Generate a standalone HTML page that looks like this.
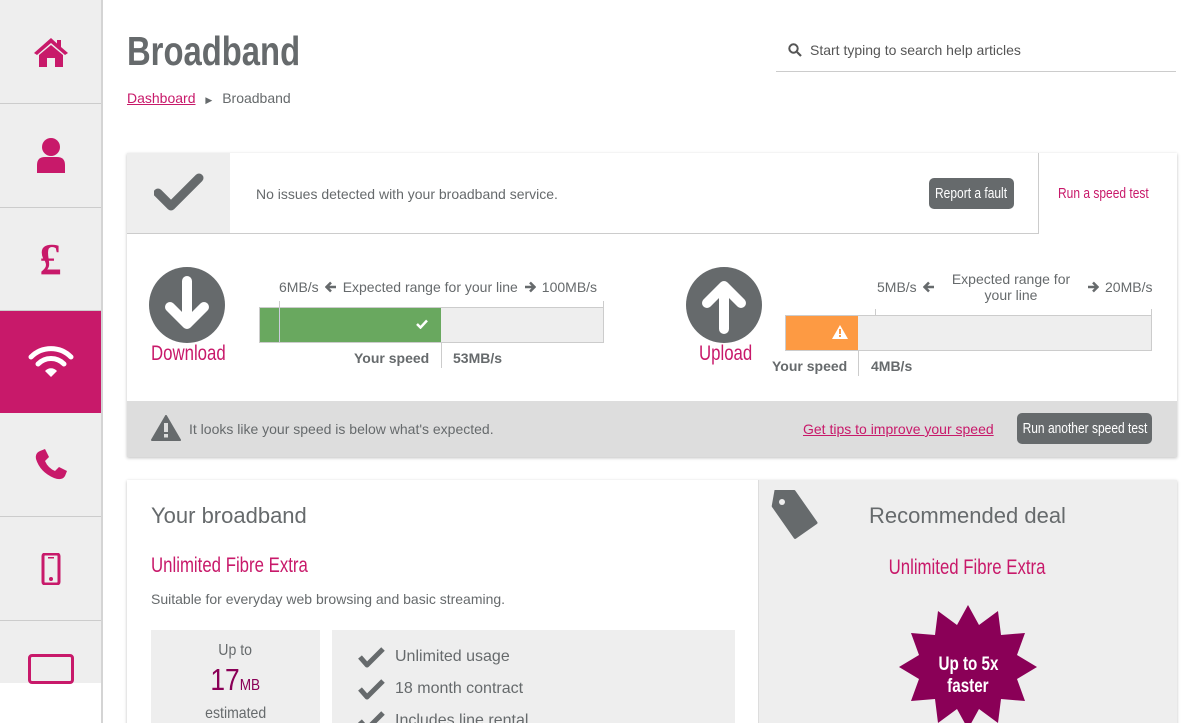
<!DOCTYPE html>
<html><head><meta charset="utf-8"><style>
*{box-sizing:border-box;margin:0;padding:0}
html,body{width:1200px;height:723px;overflow:hidden}
body{background:#fff;font-family:"Liberation Sans",sans-serif;color:#666a6c;position:relative}
.c{display:inline-block;transform:scaleX(.8);transform-origin:0 0;white-space:nowrap}
.cc{display:inline-block;transform:scaleX(.8);transform-origin:50% 0;white-space:nowrap}
.a{position:absolute}
.sb{left:0;top:0;width:103px;height:723px;border-right:2px solid #d4d4d4}
.it{position:absolute;left:0;width:101px;background:#eee;border-bottom:1px solid #ccc;display:flex;align-items:center;justify-content:center}
.pk{color:#c8196a}
.btn{background:#666a6c;color:#fff;border-radius:5px;font-size:15px;display:flex;justify-content:center;align-items:center;white-space:nowrap}
.bar{height:36px;border:1px solid #ccc;background:#eee}
.ar{display:inline-block;vertical-align:-1px;margin:0 6px}
</style></head><body>
<div class="a sb"></div>
<div class="it" style="top:0;height:104px"><svg width="38" height="32" viewBox="0 0 38 32"><path d="M19 2 L2 17 L5 19 L19 7 L33 19 L36 17 L29 11 V4 H25 V7.5Z" fill="#c8196a"/><path d="M7 19 L19 9 L31 19 V31 H23 V22 H15 V31 H7Z" fill="#c8196a"/></svg></div>
<div class="it" style="top:104px;height:104px"><svg width="32" height="38" viewBox="0 0 32 38"><circle cx="16" cy="10" r="9" fill="#c8196a"/><path d="M2 36 V28 Q2 20 10 20 H22 Q30 20 30 28 V36 Z" fill="#c8196a"/></svg></div>
<div class="it" style="top:208px;height:103px"><span style="font:bold 44px 'Liberation Serif',serif;color:#c8196a">£</span></div>
<div class="it" style="top:311px;height:102px;background:#c8196a;border-bottom:none"><svg width="46" height="34" viewBox="0 0 46 34"><path d="M3 12 A28 28 0 0 1 43 12" stroke="#fff" stroke-width="5" fill="none" stroke-linecap="round"/><path d="M10 19 A18 18 0 0 1 36 19" stroke="#fff" stroke-width="5" fill="none" stroke-linecap="round"/><path d="M17 26 A8 8 0 0 1 29 26 L23 32 Z" fill="#fff"/></svg></div>
<div class="it" style="top:413px;height:104px"><svg width="34" height="34" viewBox="0 0 34 34"><path d="M6 3 L11 1 L15 9 L11 13 Q14 20 21 23 L25 19 L33 23 L31 28 Q28 33 20 30 Q6 24 2 11 Q1 5 6 3Z" fill="#c8196a"/></svg></div>
<div class="it" style="top:517px;height:104px"><svg width="20" height="32" viewBox="0 0 20 32"><rect x="2" y="1" width="16" height="30" rx="2" fill="none" stroke="#c8196a" stroke-width="3"/><circle cx="10" cy="26" r="2" fill="#c8196a"/><rect x="7" y="4" width="6" height="1.5" fill="#c8196a"/></svg></div>
<div class="it" style="top:621px;height:62px;border-bottom:none;align-items:flex-start;padding-top:33px"><div style="width:46px;height:30px;border:3px solid #c8196a;border-radius:4px"></div></div>

<div class="a" style="left:127px;top:28px;font-size:41px;font-weight:bold"><span class="c">Broadband</span></div>
<div class="a" style="left:127px;top:90px;font-size:14px"><span class="pk" style="text-decoration:underline">Dashboard</span> <span style="font-size:9px;margin:0 6px">▶</span> Broadband</div>
<div class="a" style="left:776px;top:40px;width:400px;height:32px;border-bottom:1px solid #ccc;font-size:14px;color:#555"><svg class="a" style="left:12px;top:3px" width="14" height="14" viewBox="0 0 14 14"><circle cx="5.5" cy="5.5" r="4.2" stroke="#555" stroke-width="2" fill="none"/><path d="M9 9 L13 13" stroke="#555" stroke-width="2.2"/></svg><span class="a" style="left:34px;top:2px">Start typing to search help articles</span></div>

<div class="a" style="left:127px;top:153px;width:1050px;height:304px;box-shadow:0 1px 3px rgba(0,0,0,.25);background:#fff"></div>
<div class="a" style="left:127px;top:153px;width:103px;height:80px;background:#eee;display:flex;align-items:center;justify-content:center"><svg width="50" height="40" viewBox="0 0 50 40"><path d="M4 20 L17 33 L45 5" stroke="#666a6c" stroke-width="9" fill="none" stroke-linecap="round" stroke-linejoin="round"/></svg></div>
<div class="a" style="left:127px;top:233px;width:912px;border-top:1px solid #ccc"></div>
<div class="a" style="left:1038px;top:153px;height:81px;border-left:1px solid #ccc"></div>
<div class="a" style="left:256px;top:186px;font-size:14px">No issues detected with your broadband service.</div>
<div class="a btn" style="left:929px;top:178px;width:85px;height:31px"><span class="cc">Report a fault</span></div>
<div class="a pk" style="left:1058px;top:185px;font-size:15px"><span class="c">Run a speed test</span></div>

<!-- download -->
<div class="a" style="left:149px;top:267px;width:76px;height:76px;border-radius:50%;background:#666a6c"></div>
<svg class="a" style="left:149px;top:267px" width="76" height="76" viewBox="0 0 76 76"><path d="M38 14 V54 M21 40 L38 57 L55 40" stroke="#fff" stroke-width="10" fill="none" stroke-linecap="round" stroke-linejoin="round"/></svg>
<div class="a pk" style="left:151px;top:342px;font-size:21px"><span class="c">Download</span></div>
<div class="a" style="left:279px;top:279px;font-size:14px;white-space:nowrap">6MB/s<svg class="ar" width="12" height="12" viewBox="0 0 12 12"><path d="M11 6 H2 M6 1.5 L1.5 6 L6 10.5" stroke="#666a6c" stroke-width="2.5" fill="none"/></svg>Expected range for your line<svg class="ar" width="12" height="12" viewBox="0 0 12 12"><path d="M1 6 H10 M6 1.5 L10.5 6 L6 10.5" stroke="#666a6c" stroke-width="2.5" fill="none"/></svg>100MB/s</div>
<div class="a" style="left:279px;top:301px;height:42px;border-left:1px solid #ccc"></div>
<div class="a" style="left:603px;top:301px;height:42px;border-left:1px solid #ccc"></div>
<div class="a bar" style="left:259px;top:307px;width:345px"></div>
<div class="a" style="left:260px;top:308px;width:181px;height:34px;background:#69a85f"></div>
<div class="a" style="left:279px;top:308px;height:34px;border-left:1px solid #ccd"></div>
<svg class="a" style="left:416px;top:319px" width="12" height="10" viewBox="0 0 12 10"><path d="M1 5 L4.5 8.5 L11 1.5" stroke="#fff" stroke-width="2.5" fill="none"/></svg>
<div class="a" style="left:441px;top:342px;height:26px;border-left:1px solid #ccc"></div>
<div class="a" style="left:354px;top:350px;font-size:14px;font-weight:bold">Your speed</div>
<div class="a" style="left:453px;top:350px;font-size:14px;font-weight:bold">53MB/s</div>

<!-- upload -->
<div class="a" style="left:686px;top:267px;width:76px;height:76px;border-radius:50%;background:#666a6c"></div>
<svg class="a" style="left:686px;top:267px" width="76" height="76" viewBox="0 0 76 76"><path d="M38 62 V22 M21 36 L38 19 L55 36" stroke="#fff" stroke-width="10" fill="none" stroke-linecap="round" stroke-linejoin="round"/></svg>
<div class="a pk" style="left:699px;top:342px;font-size:21px"><span class="c">Upload</span></div>
<div class="a" style="left:877px;top:279px;font-size:14px;white-space:nowrap">5MB/s<svg class="ar" width="12" height="12" viewBox="0 0 12 12"><path d="M11 6 H2 M6 1.5 L1.5 6 L6 10.5" stroke="#666a6c" stroke-width="2.5" fill="none"/></svg></div>
<div class="a" style="left:945px;top:271px;width:132px;text-align:center;font-size:14px;line-height:16px">Expected range for your line</div>
<div class="a" style="left:1081px;top:279px;font-size:14px;white-space:nowrap"><svg class="ar" width="12" height="12" viewBox="0 0 12 12"><path d="M1 6 H10 M6 1.5 L10.5 6 L6 10.5" stroke="#666a6c" stroke-width="2.5" fill="none"/></svg>20MB/s</div>
<div class="a" style="left:875px;top:309px;height:42px;border-left:1px solid #ccc"></div>
<div class="a" style="left:1151px;top:309px;height:42px;border-left:1px solid #ccc"></div>
<div class="a bar" style="left:785px;top:315px;width:367px"></div>
<div class="a" style="left:786px;top:316px;width:72px;height:34px;background:#fd9a43"></div>
<svg class="a" style="left:832px;top:325px" width="16" height="14" viewBox="0 0 16 14"><path d="M8 0 L16 14 H0Z" fill="#fff"/><rect x="7" y="4" width="2" height="5" fill="#fd9a43"/><rect x="7" y="10" width="2" height="2" fill="#fd9a43"/></svg>
<div class="a" style="left:858px;top:350px;height:26px;border-left:1px solid #ccc"></div>
<div class="a" style="left:772px;top:358px;font-size:14px;font-weight:bold">Your speed</div>
<div class="a" style="left:871px;top:358px;font-size:14px;font-weight:bold">4MB/s</div>

<!-- footer -->
<div class="a" style="left:127px;top:401px;width:1050px;height:56px;background:#ddd"></div>
<svg class="a" style="left:151px;top:415px" width="30" height="26" viewBox="0 0 30 26"><path d="M15 1 L29 25 H1Z" fill="#666a6c" stroke="#666a6c" stroke-width="2" stroke-linejoin="round"/><rect x="13" y="8" width="4" height="9" fill="#ddd"/><rect x="13" y="19" width="4" height="3.5" fill="#ddd"/></svg>
<div class="a" style="left:189px;top:421px;font-size:14px">It looks like your speed is below what's expected.</div>
<div class="a pk" style="left:803px;top:421px;font-size:14px;text-decoration:underline">Get tips to improve your speed</div>
<div class="a btn" style="left:1017px;top:413px;width:135px;height:31px"><span class="cc">Run another speed test</span></div>

<!-- bottom cards -->
<div class="a" style="left:127px;top:480px;width:1050px;height:260px;box-shadow:0 1px 3px rgba(0,0,0,.25);background:#fff"></div>
<div class="a" style="left:758px;top:480px;width:419px;height:260px;background:#eee;border-left:1px solid #ddd"></div>
<div class="a" style="left:151px;top:503px;font-size:22px">Your broadband</div>
<div class="a pk" style="left:151px;top:554px;font-size:21px"><span class="c">Unlimited Fibre Extra</span></div>
<div class="a" style="left:151px;top:591px;font-size:14px">Suitable for everyday web browsing and basic streaming.</div>
<div class="a" style="left:151px;top:630px;width:169px;height:100px;background:#eee;text-align:center">
<div style="margin-top:12px;font-size:16px"><span class="cc" style="transform:scaleX(.88)">Up to</span></div>
<div style="margin-top:3px;color:#8a0057;font-size:31px;line-height:34px"><span class="cc" style="transform:scaleX(.85)">17<span style="font-size:16px">MB</span></span></div>
<div style="margin-top:2px;font-size:16px"><span class="cc" style="transform:scaleX(.88)">estimated</span></div></div>
<div class="a" style="left:332px;top:630px;width:403px;height:100px;background:#eee"></div>
<svg class="a" style="left:358px;top:647px" width="28" height="90" viewBox="0 0 28 90"><g stroke="#666a6c" stroke-width="5" fill="none" stroke-linejoin="round"><path d="M2 10 L9 18 L25 2"/><path d="M2 42 L9 50 L25 34"/><path d="M2 74 L9 82 L25 66"/></g></svg>
<div class="a" style="left:395px;top:641px;font-size:16px;line-height:32px">Unlimited usage<br>18 month contract<br>Includes line rental</div>
<svg class="a" style="left:770px;top:490px" width="50" height="50" viewBox="0 0 50 50"><path d="M4 2 H20 L47 29 L29 47 L2 20 V4Z" fill="#666a6c" stroke="#666a6c" stroke-width="3" stroke-linejoin="round" transform="rotate(10 25 25)"/><circle cx="12" cy="12" r="3" fill="#eee"/></svg>
<div class="a" style="left:758px;top:503px;width:419px;text-align:center;font-size:22px">Recommended deal</div>
<div class="a pk" style="left:758px;top:556px;width:419px;text-align:center;font-size:21px"><span class="cc">Unlimited Fibre Extra</span></div>
<svg class="a" style="left:897px;top:603px" width="142" height="130" viewBox="0 0 142 130"><polygon fill="#8a0057" points="71,2 82,22 101,8 104,32 128,30 120,52 140,64 120,76 128,98 104,96 101,120 82,106 71,126 60,106 41,120 38,96 14,98 22,76 2,64 22,52 14,30 38,32 41,8 60,22"/></svg>
<div class="a" style="left:897px;top:654px;width:142px;text-align:center;color:#fff;font-weight:bold;font-size:19px;line-height:22px"><span class="cc">Up to 5x</span><br><span class="cc">faster</span></div>
</body></html>
